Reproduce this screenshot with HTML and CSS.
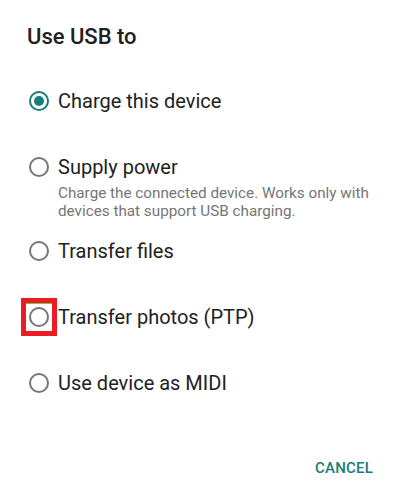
FILE: index.html
```html
<!DOCTYPE html>
<html>
<head>
<meta charset="utf-8">
<link rel="stylesheet" href="styles.css">
</head>
<body>
<div class="dialog">
  <h1 class="title">Use USB to</h1>
  <div class="options">
    <div class="option">
      <span class="radio">
        <svg width="24" height="24" viewBox="0 0 24 24"><circle cx="12" cy="12" r="9" fill="none" stroke="#177c7a" stroke-width="2"/><circle cx="12" cy="12" r="5" fill="#177c7a"/></svg>
      </span>
      <div class="body"><div class="label">Charge this device</div></div>
    </div>
    <div class="option with-caption">
      <span class="radio">
        <svg width="24" height="24" viewBox="0 0 24 24"><circle cx="12" cy="12" r="9" fill="none" stroke="#757575" stroke-width="2"/></svg>
      </span>
      <div class="body">
        <div class="label">Supply power</div>
        <div class="caption">Charge the connected device. Works only with devices that support USB charging.</div>
      </div>
    </div>
    <div class="option">
      <span class="radio">
        <svg width="24" height="24" viewBox="0 0 24 24"><circle cx="12" cy="12" r="9" fill="none" stroke="#757575" stroke-width="2"/></svg>
      </span>
      <div class="body"><div class="label">Transfer files</div></div>
    </div>
    <div class="option">
      <span class="radio highlighted">
        <svg width="24" height="24" viewBox="0 0 24 24"><circle cx="12" cy="12" r="9" fill="none" stroke="#757575" stroke-width="2"/></svg>
        <span class="mark"></span>
      </span>
      <div class="body"><div class="label">Transfer photos (PTP)</div></div>
    </div>
    <div class="option">
      <span class="radio">
        <svg width="24" height="24" viewBox="0 0 24 24"><circle cx="12" cy="12" r="9" fill="none" stroke="#757575" stroke-width="2"/></svg>
      </span>
      <div class="body"><div class="label">Use device as MIDI</div></div>
    </div>
  </div>
  <div class="actions">
    <span class="btn">CANCEL</span>
  </div>
</div>
</body>
</html>
```

FILE: styles.css
```css
html, body {
  margin: 0;
  padding: 0;
  background: #ffffff;
}
.dialog {
  font-family: Roboto, "Liberation Sans", sans-serif;
  padding: 23px 24px 0 27px;
  color: #212121;
}
.title {
  margin: 0 0 17px 0;
  font-size: 22px;
  line-height: 28px;
  font-weight: 500;
  color: #212121;
}
.options {
  display: flex;
  flex-direction: column;
}
.option {
  display: flex;
  align-items: flex-start;
  gap: 7px;
  padding: 21px 0;
}
.option.with-caption {
  padding-bottom: 0;
}
.option.with-caption + .option {
  padding-top: 19px;
}
.radio {
  position: relative;
  width: 24px;
  height: 24px;
  flex: none;
}
.radio svg {
  display: block;
}
.label {
  font-size: 20px;
  line-height: 24px;
}
.caption {
  margin-top: 5px;
  font-size: 15.25px;
  line-height: 18px;
  color: #757575;
}
.mark {
  position: absolute;
  left: -6px;
  top: -7px;
  width: 26px;
  height: 28px;
  border: 5px solid #ec1c24;
  box-shadow: inset 0 1px 0 #7dc33b;
}
.actions {
  display: flex;
  justify-content: flex-end;
  margin-top: 42px;
  padding-right: 3px;
}
.btn {
  font-size: 15px;
  line-height: 20px;
  font-weight: 500;
  color: #177c7a;
  letter-spacing: 0.2px;
}
```
